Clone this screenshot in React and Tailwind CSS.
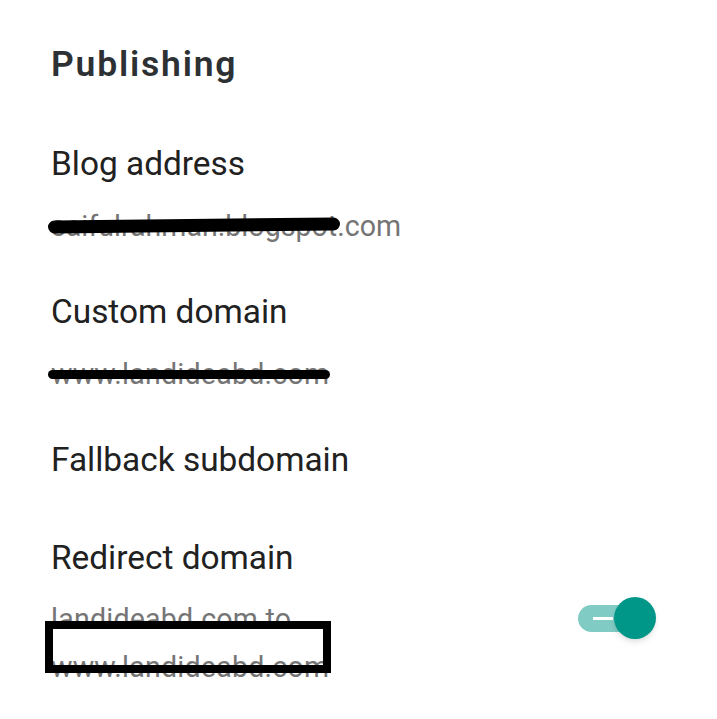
export default function App() {
    return (
        <div
            className="w-[717px] h-[719px] bg-white overflow-hidden relative"
            style={{ fontFamily: "Roboto, 'Liberation Sans', sans-serif" }}
        >
            <div className="pl-[51px] pr-[61px] pt-[40px]">
                <h1 className="text-[35.5px] leading-[48px] font-semibold text-[#2d3134] tracking-[1.8px]">
                    Publishing
                </h1>

                {/* Blog address */}
                <div className="mt-[56px]">
                    <p className="text-[33.4px] leading-[40px] text-[#212121]">Blog address</p>
                    <div className="relative mt-[24px] w-max">
                        <p className="text-[28.6px] leading-[36px] text-[#757575]">
                            saifulrahman.blogspot.com
                        </p>
                        <div className="absolute left-[-3px] top-[11px] w-[292px] h-[13px] rounded-full bg-black -rotate-[0.6deg]" />
                    </div>
                </div>

                {/* Custom domain */}
                <div className="mt-[48px]">
                    <p className="text-[33.4px] leading-[40px] text-[#212121]">Custom domain</p>
                    <div className="relative mt-[24px] w-max">
                        <p className="text-[28.6px] leading-[36px] tracking-[0.2px] text-[#757575]">
                            www.landideabd.com
                        </p>
                        <div className="absolute left-[-3px] top-[14px] w-[282px] h-[9px] rounded-full bg-black" />
                    </div>
                </div>

                {/* Fallback subdomain */}
                <div className="mt-[48px]">
                    <p className="text-[33.4px] leading-[40px] text-[#212121]">Fallback subdomain</p>
                </div>

                {/* Redirect domain */}
                <div className="mt-[58px] flex items-start justify-between">
                    <div>
                        <p className="text-[33.4px] leading-[40px] text-[#212121]">Redirect domain</p>
                        <div className="relative mt-[17px] w-max">
                            <p className="text-[28.6px] leading-[48px] tracking-[0.2px] text-[#757575]">
                                landideabd.com to
                                <br />
                                www.landideabd.com
                            </p>
                            <div className="absolute left-[-6px] top-[26px] w-[286px] h-[52px] border-[8px] border-black" />
                        </div>
                    </div>
                    <div className="mt-[58px] relative w-[78px] h-[44px] flex items-center">
                        <div className="w-[57px] h-[27px] rounded-full bg-[#80cbc4] flex items-center pl-[15px]">
                            <div className="w-[20px] h-[3px] bg-white" />
                        </div>
                        <div className="absolute left-[36px] top-[1px] w-[42px] h-[42px] rounded-full bg-[#009688] shadow-md" />
                    </div>
                </div>
            </div>
        </div>
    );
}
